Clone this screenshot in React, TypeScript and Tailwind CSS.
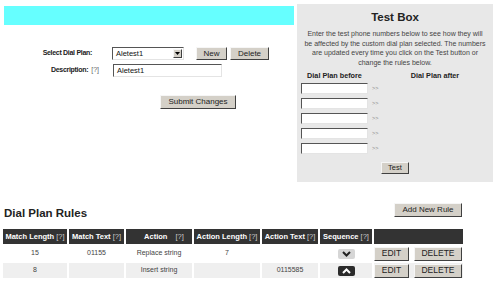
const btn =
  "bg-[#d4d0c8] border border-t-[#f6f6f6] border-l-[#f6f6f6] border-r-[#404040] border-b-[#404040] text-[#222] leading-none flex items-center justify-center";
const inset =
  "bg-white border border-t-[#555] border-l-[#555] border-r-[#e4e4e4] border-b-[#e4e4e4]";

function Chevron({ up, dark }: { up?: boolean; dark?: boolean }) {
  return (
    <div
      className={
        dark
          ? "mx-auto w-[17px] h-[10px] rounded-[2px] bg-[#2b2b2b] flex items-center justify-center"
          : "mx-auto w-[17px] h-[10px] rounded-[2px] bg-[#d6d6d6] flex items-center justify-center"
      }
    >
      <svg width="9" height="6" viewBox="0 0 9 6">
        <polyline
          points={up ? "1,5 4.5,1.5 8,5" : "1,1 4.5,4.5 8,1"}
          fill="none"
          stroke={dark ? "#fff" : "#222"}
          strokeWidth="2"
        />
      </svg>
    </div>
  );
}

const rules = [
  { len: "15", match: "01155", action: "Replace string", actLen: "7", actText: "", up: false },
  { len: "8", match: "", action: "Insert string", actLen: "", actText: "0115585", up: true },
];

export default function App() {
  return (
    <div className="w-[497px] h-[282px] bg-white overflow-hidden font-['Liberation_Sans',Arial,sans-serif] text-[#333]">
      <div className="flex pt-[4px]">
        {/* left: plan selection */}
        <div className="ml-[4px] w-[290px]">
          <div className="mt-[2px] h-[19px] bg-[#66ffff]" />

          <div className="mt-[22px] flex h-[13px] items-center">
            <div className="w-[108px] pr-[20px] text-right text-[7px] font-bold tracking-[-0.3px] whitespace-nowrap text-[#222]">
              Select Dial Plan:
            </div>
            <div className={`w-[72px] h-[13px] flex items-center ${inset}`}>
              <span className="flex-1 pl-[3px] text-[7.5px] leading-none text-[#111]">Aletest1</span>
              <span className="w-[9px] h-[9px] mr-[1px] bg-[#d4d0c8] border border-t-[#f6f6f6] border-l-[#f6f6f6] border-r-[#404040] border-b-[#404040] flex items-center justify-center">
                <svg width="5" height="3" viewBox="0 0 5 3">
                  <polygon points="0,0 5,0 2.5,3" fill="#000" />
                </svg>
              </span>
            </div>
            <button className={`ml-[12px] w-[31px] h-[13px] text-[8px] ${btn}`}>New</button>
            <button className={`ml-[3px] w-[39px] h-[13px] text-[8px] ${btn}`}>Delete</button>
          </div>

          <div className="mt-[4px] flex h-[13px] items-center">
            <div className="w-[109px] pr-[14px] text-right text-[7px] whitespace-nowrap text-[#222]">
              <span className="font-bold tracking-[-0.3px]">Description:</span>
              <span className="ml-[3px] text-[#666]">[?]</span>
            </div>
            <div className={`w-[109px] h-[13px] flex items-center ${inset}`}>
              <span className="pl-[3px] text-[7.5px] leading-none text-[#111]">Aletest1</span>
            </div>
          </div>

          <button className={`mt-[18px] ml-[156px] w-[76px] h-[14px] text-[8px] ${btn}`}>
            Submit Changes
          </button>
        </div>

        {/* right: test box */}
        <div className="ml-[3px] w-[196px] h-[178px] bg-[#e8e8e8] flex flex-col">
          <div className="pt-[6px] text-center text-[11.5px] leading-[14px] font-bold text-[#222]">Test Box</div>
          <p className="mt-[5px] text-center text-[7px] leading-[9.5px] text-[#444] whitespace-nowrap">
            Enter the test phone numbers below to see how they will
            <br />
            be affected by the custom dial plan selected. The numbers
            <br />
            are updated every time you click on the Test button or
            <br />
            change the rules below.
          </p>
          <div className="mt-[4px] flex text-[7.25px] leading-[10px] font-bold text-[#222] whitespace-nowrap">
            <div className="ml-[4px] w-[67px] flex justify-center">Dial Plan before</div>
            <div className="ml-[17px] w-[100px] text-center">Dial Plan after</div>
          </div>
          <div className="mt-[2px] flex flex-col gap-[4px]">
            {[0, 1, 2, 3, 4].map((i) => (
              <div key={i} className="flex items-center h-[11px]">
                <div className={`ml-[4px] w-[67px] h-[11px] ${inset}`} />
                <span className="ml-[4px] text-[5.5px] text-[#888]">&gt;&gt;</span>
              </div>
            ))}
          </div>
          <button className={`mt-[8px] self-center w-[28px] h-[12px] text-[7.5px] ${btn}`}>Test</button>
        </div>
      </div>

      {/* rules */}
      <div className="mt-[21px] flex h-[17px] w-[462px] justify-between">
        <h2 className="ml-[4px] mt-[3px] text-[11.5px] leading-[14px] font-bold text-[#222]">Dial Plan Rules</h2>
        <button className={`w-[68px] h-[14px] text-[8px] ${btn}`}>Add New Rule</button>
      </div>

      <table className="mt-[7px] ml-[1px] w-[464px] table-fixed border-separate border-spacing-[2px]">
        <colgroup>
          <col className="w-[64px]" />
          <col className="w-[55px]" />
          <col className="w-[66px]" />
          <col className="w-[66px]" />
          <col className="w-[56px]" />
          <col className="w-[52px]" />
          <col className="w-[89px]" />
        </colgroup>
        <thead>
          <tr className="h-[15px]">
            <th className="p-0 bg-[#333] text-white text-[7.5px] font-bold whitespace-nowrap">
              Match Length <span className="font-normal text-[#ccc]">[?]</span>
            </th>
            <th className="p-0 bg-[#333] text-white text-[7.5px] font-bold whitespace-nowrap">
              Match Text <span className="font-normal text-[#ccc]">[?]</span>
            </th>
            <th className="p-0 pl-[10px] bg-[#333] text-white text-[7.5px] font-bold whitespace-nowrap">
              Action <span className="ml-[6px] font-normal text-[#ccc]">[?]</span>
            </th>
            <th className="p-0 bg-[#333] text-white text-[7.5px] font-bold whitespace-nowrap">
              Action Length <span className="font-normal text-[#ccc]">[?]</span>
            </th>
            <th className="p-0 bg-[#333] text-white text-[7.5px] font-bold whitespace-nowrap">
              Action Text <span className="font-normal text-[#ccc]">[?]</span>
            </th>
            <th className="p-0 bg-[#333] text-white text-[7.5px] font-bold whitespace-nowrap">
              Sequence <span className="font-normal text-[#ccc]">[?]</span>
            </th>
            <th className="p-0 bg-[#333]" />
          </tr>
        </thead>
        <tbody>
          {rules.map((r, i) => {
            const cell =
              i % 2 === 0
                ? "p-0 h-[15px] bg-white text-center text-[7px] text-[#444]"
                : "p-0 h-[15px] bg-[#efefef] text-center text-[7px] text-[#444]";
            return (
              <tr key={i}>
                <td className={cell}>{r.len}</td>
                <td className={cell}>{r.match}</td>
                <td className={cell}>{r.action}</td>
                <td className={cell}>{r.actLen}</td>
                <td className={cell}>{r.actText}</td>
                <td className={cell}>
                  <Chevron up={r.up} dark={r.up} />
                </td>
                <td className={cell}>
                  <div className="flex gap-[5px]">
                    <button className={`w-[35px] h-[14px] text-[8.5px] ${btn}`}>EDIT</button>
                    <button className={`w-[48px] h-[14px] text-[8.5px] ${btn}`}>DELETE</button>
                  </div>
                </td>
              </tr>
            );
          })}
        </tbody>
      </table>
    </div>
  );
}
